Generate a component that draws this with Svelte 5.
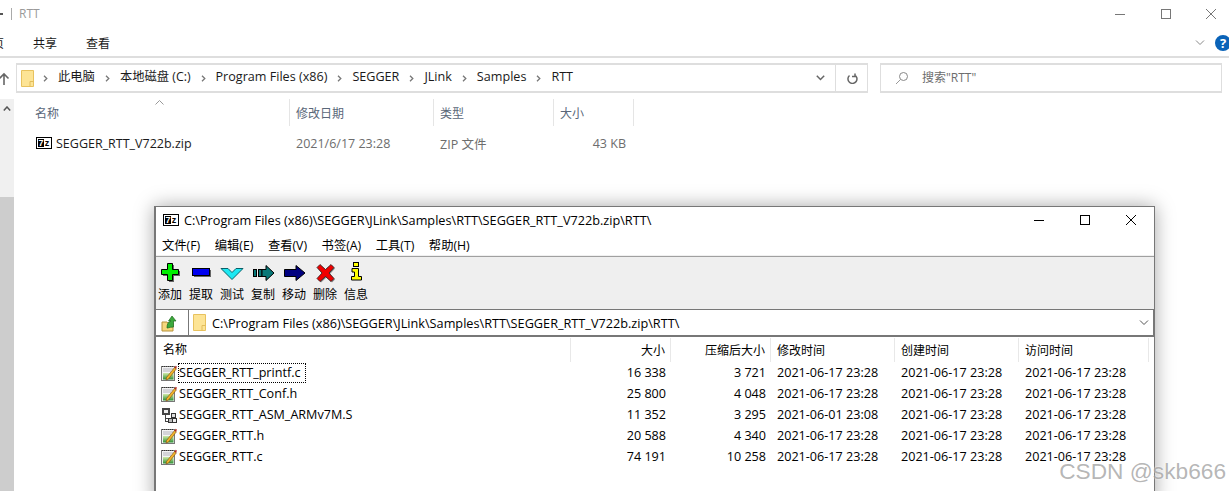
<script lang="ts">
  const crumbs = ['此电脑', '本地磁盘 (C:)', 'Program Files (x86)', 'SEGGER', 'JLink', 'Samples', 'RTT'];
  const explorerCols = [
    { label: '名称', width: 274 },
    { label: '修改日期', width: 144 },
    { label: '类型', width: 120 },
    { label: '大小', width: 80 }
  ];
  const tools = ['添加', '提取', '测试', '复制', '移动', '删除', '信息'];
  const menus = ['文件(F)', '编辑(E)', '查看(V)', '书签(A)', '工具(T)', '帮助(H)'];
  const files = [
    { name: 'SEGGER_RTT_printf.c', size: '16 338', packed: '3 721', modified: '2021-06-17 23:28', kind: 'text', focus: true },
    { name: 'SEGGER_RTT_Conf.h', size: '25 800', packed: '4 048', modified: '2021-06-17 23:28', kind: 'text' },
    { name: 'SEGGER_RTT_ASM_ARMv7M.S', size: '11 352', packed: '3 295', modified: '2021-06-01 23:08', kind: 'asm' },
    { name: 'SEGGER_RTT.h', size: '20 588', packed: '4 340', modified: '2021-06-17 23:28', kind: 'text' },
    { name: 'SEGGER_RTT.c', size: '74 191', packed: '10 258', modified: '2021-06-17 23:28', kind: 'text' }
  ];
</script>

{#snippet sevenZip()}
  <span class="sz-icon"><b>7</b><i>z</i></span>
{/snippet}

{#snippet folder()}
  <svg class="folder" width="13" height="17" viewBox="0 0 13 17">
    <path d="M.5.5h12v16H.5z" fill="#fde495" stroke="#e8c25e" />
    <path d="M9 16.500v-5h3.500" fill="none" stroke="#e2bd5c" />
  </svg>
{/snippet}

{#snippet textIcon()}
  <svg width="16" height="16" viewBox="0 0 16 16">
    <defs>
      <linearGradient id="note-green" x1="0" y1="0" x2="0" y2="1">
        <stop offset="0" stop-color="#cfeaa8" />
        <stop offset="1" stop-color="#2f8f35" />
      </linearGradient>
    </defs>
    <rect x=".5" y="1.500" width="13" height="14" fill="#f4f4f4" stroke="#777" />
    <path d="M1 1.500h12" stroke="#333" stroke-dasharray="1 1" />
    <path d="M2 4h10M2 6h8" stroke="#b4b4bc" />
    <rect x="2" y="8" width="10.500" height="6.500" fill="url(#note-green)" />
    <path d="M5.500 12.500 13.500 2.500l1.800 1.400L7.500 14l-2.500 1z" fill="#f0b429" stroke="#7a4a12" stroke-width=".6" />
    <path d="M13.500 2.500 14.800.7l1 .9-.6 2.300z" fill="#b3261e" />
  </svg>
{/snippet}

{#snippet asmIcon()}
  <svg width="16" height="16" viewBox="0 0 16 16" shape-rendering="crispEdges">
    <rect x="1" y="1" width="8" height="7" fill="#444" />
    <rect x="3" y="3" width="4" height="3" fill="#eee" />
    <path d="M4.500 8v6h3M5 11h4" fill="none" stroke="#444" />
    <rect x="10.500" y="6.500" width="4" height="4" fill="#ddd" stroke="#333" />
    <rect x="7.500" y="11.500" width="4" height="4" fill="#bbb" stroke="#333" />
    <rect x="11.500" y="11.500" width="4" height="4" fill="#eee" stroke="#333" />
  </svg>
{/snippet}

{#snippet toolIcon(i: number)}
  <svg width="24" height="24" viewBox="0 0 24 24">
    {#if i === 0}
      <path d="M11 5h5v6h6v5h-6v6h-5v-6H5v-5h6z" fill="#666" />
      <path d="M9.500 3.500h5v6h6v5h-6v6h-5v-6h-6v-5h6z" fill="#00f000" stroke="#000" />
    {:else if i === 1}
      <rect x="5" y="10" width="17" height="7" fill="#666" />
      <rect x="3.500" y="8.500" width="17" height="7" fill="#0000f0" stroke="#000" />
    {:else if i === 2}
      <path d="M1 8.500h7l4 4 4-4h7L12 19.500z" fill="#1ee8f2" stroke="#0a6068" />
    {:else if i === 3}
      <rect x="2.500" y="9.500" width="3" height="7" fill="#087878" stroke="#000" />
      <rect x="7.500" y="9.500" width="3.500" height="7" fill="#087878" stroke="#000" />
      <path d="M11 9.500h4V5.500l8 7.500-8 7.500v-4h-4z" fill="#087878" stroke="#000" />
    {:else if i === 4}
      <path d="M2.500 9.500H14V5.500l9 7.500-9 7.500v-4H2.500z" fill="#000080" stroke="#000" />
    {:else if i === 5}
      <path d="M8 5.500l5.500 5 5.500-5 3 3-5 5.500 5 5.500-3 3-5.500-5-5.500 5-3-3 5-5.500-5-5.500z" fill="#888" />
      <path d="M7 4.500l5.500 5 5.500-5 3 3-5 5.500 5 5.500-3 3-5.500-5-5.500 5-3-3 5-5.500-5-5.500z" fill="#f00000" stroke="#222" stroke-width=".8" />
    {:else}
      <rect x="9.500" y="2.500" width="5" height="4" fill="#ffff00" stroke="#000" />
      <path d="M8 8.500h6.500v8h3v3.500h-10v-3.500h3v-4.500H8z" fill="#ffff00" stroke="#000" />
    {/if}
  </svg>
{/snippet}

<div class="page">
  <div class="explorer">
    <div class="titlebar">
      <span class="title-stub"></span>
      <span class="title-icon"></span>
      <span class="title-text">RTT</span>
      <div class="win-controls gray">
        <svg width="12" height="12" viewBox="0 0 12 12"><path d="M1 6.500h10" stroke="#777" /></svg>
        <svg width="12" height="12" viewBox="0 0 12 12"><rect x="1.500" y="1.500" width="9" height="9" fill="none" stroke="#777" /></svg>
        <svg width="12" height="12" viewBox="0 0 12 12"><path d="M1 1l10 10M11 1 1 11" stroke="#777" /></svg>
      </div>
    </div>

    <div class="ribbon">
      <span class="tab first">主页</span>
      <span class="tab">共享</span>
      <span class="tab">查看</span>
      <svg class="collapse" width="10" height="6" viewBox="0 0 10 6"><path d="M1 .5l4 4 4-4" fill="none" stroke="#888" /></svg>
      <span class="help">?</span>
    </div>

    <div class="addr-row">
      <svg class="up" width="12" height="13" viewBox="0 0 12 13"><path d="M6 13V2M1.500 6.500 6 2l4.500 4.500" fill="none" stroke="#666" stroke-width="1.600" /></svg>
      <div class="addr">
        {@render folder()}
        {#each crumbs as c, i}
          <span class="chev">
            <svg width="5" height="7" viewBox="0 0 5 7"><path d="M1 .8 3.800 3.500 1 6.200" fill="none" stroke="#777" stroke-width="1.300" /></svg>
          </span>
          <span class="crumb" class:cjk={i < 2}>{c}</span>
        {/each}
        <span class="spacer"></span>
        <svg class="addr-drop" width="9" height="6" viewBox="0 0 9 6"><path d="M.8.8l3.700 3.700L8.200.8" fill="none" stroke="#666" stroke-width="1.500" /></svg>
        <span class="refresh">
          <svg width="12" height="12" viewBox="0 0 12 12"><path d="M3 2.500a4.500 4.500 0 1 0 5-.6M8.500 .5v3h-3" transform="translate(.5 1)" fill="none" stroke="#666" stroke-width="1.500" /></svg>
        </span>
      </div>
      <div class="search">
        <svg width="14" height="14" viewBox="0 0 14 14"><circle cx="8.500" cy="5.500" r="4" fill="none" stroke="#888" /><path d="M5.500 8.500 1 13" stroke="#999" /></svg>
        <span>搜索"RTT"</span>
      </div>
    </div>

    <div class="content">
      <div class="scrollbar">
        <svg width="8" height="5" viewBox="0 0 8 5"><path d="M.8 4.500 4 1l3.200 3.500" fill="none" stroke="#555" stroke-width="1.500" /></svg>
        <div class="thumb"></div>
      </div>
      <div class="list">
        <div class="list-head">
          {#each explorerCols as col}
            <span class="head-cell" style="width: {col.width}px">{col.label}</span>
          {/each}
          <svg class="sort" width="9" height="5" viewBox="0 0 9 5"><path d="M.5 4.500l4-4 4 4" fill="none" stroke="#999" /></svg>
        </div>
        <div class="list-row">
          <span class="cell name" style="width: 274px">{@render sevenZip()}SEGGER_RTT_V722b.zip</span>
          <span class="cell" style="width: 144px">2021/6/17 23:28</span>
          <span class="cell" style="width: 120px">ZIP 文件</span>
          <span class="cell size" style="width: 72px">43 KB</span>
        </div>
      </div>
    </div>
  </div>

  <div class="zip-window">
    <div class="zip-title">
      {@render sevenZip()}
      <span class="path-text">C:\Program Files (x86)\SEGGER\JLink\Samples\RTT\SEGGER_RTT_V722b.zip\RTT\</span>
      <div class="win-controls">
        <svg width="12" height="12" viewBox="0 0 12 12"><path d="M1 6.500h10" stroke="#000" /></svg>
        <svg width="12" height="12" viewBox="0 0 12 12"><rect x="1.500" y="1.500" width="9" height="9" fill="none" stroke="#000" /></svg>
        <svg width="12" height="12" viewBox="0 0 12 12"><path d="M1 1l10 10M11 1 1 11" stroke="#000" /></svg>
      </div>
    </div>
    <div class="menu">
      {#each menus as m}<span>{m}</span>{/each}
    </div>
    <div class="toolbar">
      {#each tools as t, i}
        <div class="tool">
          {@render toolIcon(i)}
          <span>{t}</span>
        </div>
      {/each}
    </div>
    <div class="path-row">
      <svg class="go-up" width="16" height="18" viewBox="0 0 16 18">
        <path d="M1 8h5l1 1h5v8H1z" fill="#f6d77e" stroke="#b8923a" />
        <path d="M6 14c0-4 1-6 4-7H7.500L11 2l4 5h-2.500v6c-2 0-4 .5-6 1z" fill="#3ca83c" stroke="#1d6a1d" stroke-width=".7" />
      </svg>
      <div class="path-box">
        {@render folder()}
        <span class="path-text">C:\Program Files (x86)\SEGGER\JLink\Samples\RTT\SEGGER_RTT_V722b.zip\RTT\</span>
        <svg class="path-drop" width="10" height="6" viewBox="0 0 10 6"><path d="M1 .5l4 4 4-4" fill="none" stroke="#555" /></svg>
      </div>
    </div>
    <div class="table">
      <div class="t-row t-head">
        <span class="t-name">名称</span>
        <span class="t-num">大小</span>
        <span class="t-num">压缩后大小</span>
        <span class="t-date">修改时间</span>
        <span class="t-date">创建时间</span>
        <span class="t-date last">访问时间</span>
      </div>
      {#each files as f}
        <div class="t-row">
          <span class="t-name">
            {#if f.kind === 'text'}{@render textIcon()}{:else}{@render asmIcon()}{/if}
            <span class="fname" class:focus={f.focus}>{f.name}</span>
          </span>
          <span class="t-num">{f.size}</span>
          <span class="t-num">{f.packed}</span>
          <span class="t-date">{f.modified}</span>
          <span class="t-date">2021-06-17 23:28</span>
          <span class="t-date last">2021-06-17 23:28</span>
        </div>
      {/each}
    </div>
  </div>

  <div class="watermark">CSDN @skb666</div>
</div>

<style>
  :global(body) {
    margin: 0;
    background: #fff;
  }

  .page {
    position: relative;
    width: 1229px;
    height: 491px;
    overflow: hidden;
    background: #fff;
    color: #1a1a1a;
    font-family: "Open Sans", "Noto Sans CJK SC", sans-serif;
    font-size: 12.5px;
  }

  /* explorer behind */
  .titlebar {
    display: flex;
    align-items: center;
    height: 29px;
    box-sizing: border-box;
    padding-bottom: 2px;
    color: #9a9a9a;
    font-size: 12px;
  }

  .title-stub {
    width: 3px;
    height: 2px;
    margin-right: 8px;
    background: #555;
  }

  .title-icon {
    width: 1px;
    height: 12px;
    background: #aaa;
  }

  .title-text {
    margin-left: 7px;
  }

  .win-controls {
    display: flex;
    gap: 34px;
    margin-left: auto;
    padding-right: 17px;
  }

  .win-controls.gray {
    gap: 33.500px;
    padding-right: 12px;
  }

  .ribbon {
    display: flex;
    align-items: center;
    height: 27px;
    border-bottom: 2px solid #dedede;
    font-size: 12px;
  }

  .tab {
    margin-right: 29px;
  }

  .tab.first {
    margin-left: -20px;
  }

  .collapse {
    margin-left: auto;
    margin-right: 10px;
  }

  .help {
    width: 16px;
    height: 16px;
    margin-right: -2px;
    border-radius: 50%;
    background: #0a63b8;
    color: #fff;
    font-size: 13px;
    font-weight: 700;
    line-height: 16px;
    text-align: center;
  }

  .addr-row {
    display: flex;
    align-items: center;
    height: 30px;
    margin-top: 5px;
  }

  .up {
    margin-left: -2px;
    margin-right: 6px;
  }

  .addr {
    display: flex;
    align-items: center;
    width: 852px;
    height: 30px;
    box-sizing: border-box;
    padding-left: 4px;
    border: 1px solid #dedede;
    border-width: 2px 1px;
  }

  .addr .folder {
    margin-right: -1px;
  }

  .chev {
    display: flex;
    justify-content: center;
    width: 25px;
  }

  .crumb {
    margin-top: -4px;
    font-size: 12.600px;
  }

  .crumb.cjk {
    font-size: 12.300px;
  }

  .spacer {
    flex: 1;
  }

  .addr-drop {
    margin-right: 10px;
  }

  .refresh {
    display: flex;
    align-items: center;
    justify-content: center;
    width: 31px;
    height: 100%;
    border-left: 1px solid #dedede;
  }

  .search {
    display: flex;
    align-items: center;
    gap: 13px;
    width: 342px;
    height: 30px;
    box-sizing: border-box;
    margin-left: 12px;
    padding-left: 14px;
    border: 1px solid #dedede;
    border-width: 2px 1px;
    color: #6d6d6d;
    font-size: 12px;
  }

  .search span {
    margin-top: -2px;
  }

  .content {
    display: flex;
    height: 399px;
    margin-top: 6px;
  }

  .scrollbar {
    display: flex;
    flex-direction: column;
    align-items: center;
    width: 14px;
    padding-top: 7px;
    background: #f0f0f0;
  }

  .thumb {
    align-self: stretch;
    height: 300px;
    margin-top: 86px;
    background: #cdcdcd;
  }

  .list {
    padding-left: 2px;
  }

  .list-head {
    position: relative;
    display: flex;
    height: 27px;
    color: #5a6779;
    font-size: 12px;
  }

  .head-cell {
    box-sizing: border-box;
    padding: 5px 0 0 19px;
    border-right: 1px solid #e5e5e5;
  }

  .head-cell + .head-cell {
    padding-left: 6px;
  }

  .sort {
    position: absolute;
    top: 1px;
    left: 139px;
  }

  .list-row {
    display: flex;
    align-items: center;
    height: 22px;
    margin-top: 6px;
    color: #6d6d6d;
  }

  .cell {
    padding-left: 6px;
    box-sizing: border-box;
  }

  .cell.name {
    display: flex;
    align-items: center;
    gap: 4px;
    padding-left: 20px;
    color: #1a1a1a;
  }

  .cell.size {
    text-align: right;
  }

  .sz-icon {
    display: inline-flex;
    width: 16px;
    height: 12px;
    box-sizing: border-box;
    padding: 1px;
    border: 1px solid #000;
    background: #fff;
    flex-shrink: 0;
    font-family: "Liberation Sans", sans-serif;
    font-size: 9px;
    font-weight: 700;
    line-height: 8px;
    text-align: center;
  }

  .sz-icon b {
    width: 6px;
    background: #000;
    color: #fff;
  }

  .sz-icon i {
    flex: 1;
    background: #fff;
    color: #000;
    font-style: normal;
  }

  /* 7-zip window */
  .zip-window {
    position: absolute;
    left: 154px;
    top: 206px;
    width: 1001px;
    height: 300px;
    box-sizing: border-box;
    border: 1px solid #777;
    border-left-width: 2px;
    background: #fff;
    box-shadow: 0 0 18px rgba(0, 0, 0, .35);
    color: #000;
    font-size: 12.600px;
  }

  .path-text {
    font-size: 12.700px;
  }

  .zip-title {
    display: flex;
    align-items: center;
    gap: 5px;
    height: 27px;
    box-sizing: border-box;
    padding: 0 0 2px 7px;
  }

  .menu {
    display: flex;
    align-items: center;
    gap: 14.500px;
    height: 21px;
    padding-left: 6px;
    border-bottom: 1px solid #f0f0f0;
    font-size: 12.300px;
  }

  .toolbar {
    display: flex;
    gap: 7px;
    height: 53px;
    padding: 3px 0 0 2px;
    box-sizing: border-box;
    border-top: 1px solid #a0a0a0;
    background: #efefef;
    font-size: 12px;
  }

  .tool {
    display: flex;
    flex-direction: column;
    align-items: center;
    width: 24px;
  }

  .tool span {
    margin-top: 1px;
    white-space: nowrap;
  }

  .path-row {
    display: flex;
    align-items: center;
    height: 28px;
    box-sizing: border-box;
    border-top: 1px solid #777;
    border-bottom: 2px solid #777;
    background: #fff;
  }

  .go-up {
    margin-left: 5px;
    margin-right: 11px;
  }

  .path-box {
    display: flex;
    flex: 1;
    align-items: center;
    gap: 6px;
    height: 100%;
    padding-left: 4px;
    border-left: 1px solid #777;
    border-right: 1px solid #777;
  }

  .path-drop {
    margin-left: auto;
    margin-right: 4px;
  }

  .table {
    margin-left: 1px;
  }

  .t-row {
    display: grid;
    grid-template-columns: 414px 100px 100px 124px 124px 130px;
    align-items: center;
    height: 21px;
  }

  .t-head {
    height: 25px;
    font-size: 12px;
  }

  .t-head span {
    height: 24px;
    line-height: 26px;
    border-right: 1px solid #e8e8e8;
  }

  .t-name {
    display: flex;
    align-items: center;
    gap: 1px;
    padding-left: 4px;
  }

  .t-head .t-name {
    padding-left: 6px;
  }

  .t-num {
    padding-right: 5px;
    text-align: right;
  }

  .t-date {
    padding-left: 6px;
  }

  .fname {
    padding-right: 4px;
    line-height: 18px;
    border: 1px dotted transparent;
  }

  .fname.focus {
    border-color: #000;
  }

  .watermark {
    position: absolute;
    right: 3px;
    bottom: 6px;
    color: rgba(120, 120, 120, .55);
    font-family: "Liberation Sans", sans-serif;
    font-size: 22.700px;
    text-shadow: 0 0 2px #fff;
  }
</style>
